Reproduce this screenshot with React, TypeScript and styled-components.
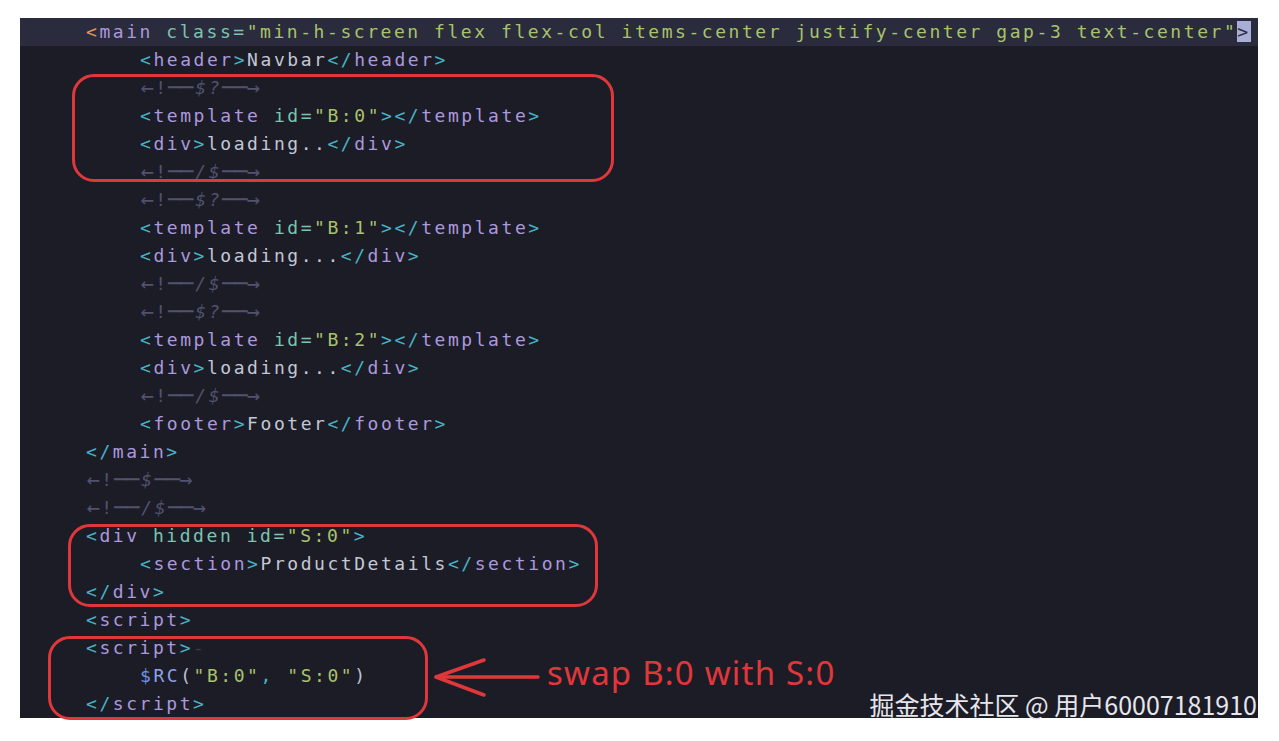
import React from 'react';
import styled, { createGlobalStyle } from 'styled-components';

const GlobalStyle = createGlobalStyle`
  html, body { margin: 0; padding: 0; background: #ffffff; }
  body { font-family: "DejaVu Sans Mono", monospace; }
`;

const CELL = 13.39;

const Page = styled.div`
  position: relative;
  width: 1279px;
  height: 741px;
  padding: 18px 21px 0 20px;
  box-sizing: border-box;
`;

const Panel = styled.div`
  background: #1c1c27;
  height: 700px;
  display: flex;
  flex-direction: column;
  font-family: "DejaVu Sans Mono", monospace;
  font-size: 18px;
  letter-spacing: 2.55px;
  overflow: hidden;
`;

const Line = styled.div<{ $indent: number; $active?: boolean }>`
  height: 28px;
  line-height: 28px;
  padding-left: ${(p) => 66 + p.$indent * 54}px;
  white-space: pre;
  background: ${(p) => (p.$active ? '#2a2b3c' : 'transparent')};
  color: #c4c7d4;
`;

const Punct = styled.span`color: #47b3c6;`;
const Caret = styled.span`color: #ea935a;`;
const TagName = styled.span`color: #ab99dc;`;
const AttrName = styled.span`color: #7dc4b0;`;
const Str = styled.span`color: #a9c36b;`;
const Plain = styled.span`color: #c4c7d4;`;
const Paren = styled.span`color: #bfc3d1;`;
const Dollar = styled.span`color: #6f90e2;`;
const Fn = styled.span`color: #8ea3e6;`;
const Faint = styled.span`color: #3b3d52;`;
const Comment = styled.span`
  color: #50536d;
`;
const Lig = styled.span<{ $cells: number; $size?: number }>`
  display: inline-block;
  width: ${(p) => p.$cells * CELL}px;
  text-align: center;
  letter-spacing: -1px;
  font-size: ${(p) => p.$size ?? 18}px;
  line-height: 28px;
  vertical-align: top;
  white-space: nowrap;
  overflow: visible;
`;
const SlantText = styled.span`
  font-style: italic;
`;
const Cursor = styled.span`
  background: #a9aed6;
  color: #2a2b3c;
`;

const Annotation = styled.div<{ $left: number; $top: number; $width: number; $height: number }>`
  position: absolute;
  left: ${(p) => p.$left}px;
  top: ${(p) => p.$top}px;
  width: ${(p) => p.$width}px;
  height: ${(p) => p.$height}px;
  box-sizing: border-box;
  border: 3px solid #e0383a;
  border-radius: 22px;
  pointer-events: none;
`;

const ArrowSvg = styled.svg`
  position: absolute;
  left: 430px;
  top: 650px;
  width: 115px;
  height: 56px;
  overflow: visible;
`;

const Note = styled.div`
  position: absolute;
  left: 547px;
  top: 650px;
  font-family: "Noto Sans", sans-serif;
  font-size: 33px;
  line-height: 46px;
  color: #e0383a;
  letter-spacing: 1.2px;
`;

const Watermark = styled.div`
  position: absolute;
  right: 22px;
  top: 688px;
  font-family: "Noto Sans CJK SC", "Noto Sans", sans-serif;
  font-size: 25px;
  line-height: 32px;
  color: #e6e6ec;
  letter-spacing: 0px;
`;

const Open: React.FC<{ name: string; children?: React.ReactNode }> = ({ name, children }) => (
  <>
    <Punct>&lt;</Punct>
    <TagName>{name}</TagName>
    {children}
    <Punct>&gt;</Punct>
  </>
);

const Close: React.FC<{ name: string }> = ({ name }) => (
  <>
    <Punct>&lt;/</Punct>
    <TagName>{name}</TagName>
    <Punct>&gt;</Punct>
  </>
);

const Attr: React.FC<{ name: string; value?: string }> = ({ name, value }) => (
  <>
    {' '}
    <AttrName>{name}</AttrName>
    {value !== undefined && (
      <>
        <AttrName>=</AttrName>
        <Str>"{value}"</Str>
      </>
    )}
  </>
);

const Marker: React.FC<{ mid: string }> = ({ mid }) => (
  <Comment>
    <Lig $cells={1} $size={22}>←</Lig>
    <Lig $cells={1}>!</Lig>
    <Lig $cells={2} $size={22}>──</Lig>
    {mid.split('').map((c, i) => (
      <Lig key={i} $cells={1}>
        <SlantText>{c}</SlantText>
      </Lig>
    ))}
    <Lig $cells={3} $size={22}>──→</Lig>
  </Comment>
);

export default function App() {
  return (
    <>
      <GlobalStyle />
      <Page>
        <Panel>
          <Line $indent={0} $active>
            <Caret>&lt;</Caret>
            <TagName>main</TagName> <AttrName>class=</AttrName>
            <Str>"min-h-screen flex flex-col items-center justify-center gap-3 text-center"</Str>
            <Cursor>&gt;</Cursor>
          </Line>
          <Line $indent={1}>
            <Open name="header" />
            <Plain>Navbar</Plain>
            <Close name="header" />
          </Line>
          <Line $indent={1}><Marker mid="$?" /></Line>
          <Line $indent={1}>
            <Open name="template"><Attr name="id" value="B:0" /></Open>
            <Close name="template" />
          </Line>
          <Line $indent={1}>
            <Open name="div" />
            <Plain>loading..</Plain>
            <Close name="div" />
          </Line>
          <Line $indent={1}><Marker mid="/$" /></Line>
          <Line $indent={1}><Marker mid="$?" /></Line>
          <Line $indent={1}>
            <Open name="template"><Attr name="id" value="B:1" /></Open>
            <Close name="template" />
          </Line>
          <Line $indent={1}>
            <Open name="div" />
            <Plain>loading...</Plain>
            <Close name="div" />
          </Line>
          <Line $indent={1}><Marker mid="/$" /></Line>
          <Line $indent={1}><Marker mid="$?" /></Line>
          <Line $indent={1}>
            <Open name="template"><Attr name="id" value="B:2" /></Open>
            <Close name="template" />
          </Line>
          <Line $indent={1}>
            <Open name="div" />
            <Plain>loading...</Plain>
            <Close name="div" />
          </Line>
          <Line $indent={1}><Marker mid="/$" /></Line>
          <Line $indent={1}>
            <Open name="footer" />
            <Plain>Footer</Plain>
            <Close name="footer" />
          </Line>
          <Line $indent={0}><Close name="main" /></Line>
          <Line $indent={0}><Marker mid="$" /></Line>
          <Line $indent={0}><Marker mid="/$" /></Line>
          <Line $indent={0}>
            <Open name="div"><Attr name="hidden" /><Attr name="id" value="S:0" /></Open>
          </Line>
          <Line $indent={1}>
            <Open name="section" />
            <Plain>ProductDetails</Plain>
            <Close name="section" />
          </Line>
          <Line $indent={0}><Close name="div" /></Line>
          <Line $indent={0}><Open name="script" /></Line>
          <Line $indent={0}>
            <Open name="script" />
            <Faint>-</Faint>
          </Line>
          <Line $indent={1}>
            <Dollar>$</Dollar>
            <Fn>RC</Fn>
            <Paren>(</Paren>
            <Str>"B:0"</Str>
            <Punct>,</Punct> <Str>"S:0"</Str>
            <Paren>)</Paren>
          </Line>
          <Line $indent={0}><Close name="script" /></Line>
        </Panel>

        <Annotation $left={72} $top={74} $width={542} $height={108} />
        <Annotation $left={68} $top={524} $width={530} $height={83} />
        <Annotation $left={48} $top={636} $width={380} $height={84} />

        <ArrowSvg viewBox="0 0 115 56">
          <g fill="none" stroke="#e0383a" strokeWidth="3.5" strokeLinecap="round" strokeLinejoin="round">
            <path d="M6 27 L108 27" />
            <path d="M54 10 L6 27 L54 45" />
          </g>
        </ArrowSvg>
        <Note>swap B:0 with S:0</Note>

        <Watermark>掘金技术社区 @ 用户60007181910</Watermark>
      </Page>
    </>
  );
}
